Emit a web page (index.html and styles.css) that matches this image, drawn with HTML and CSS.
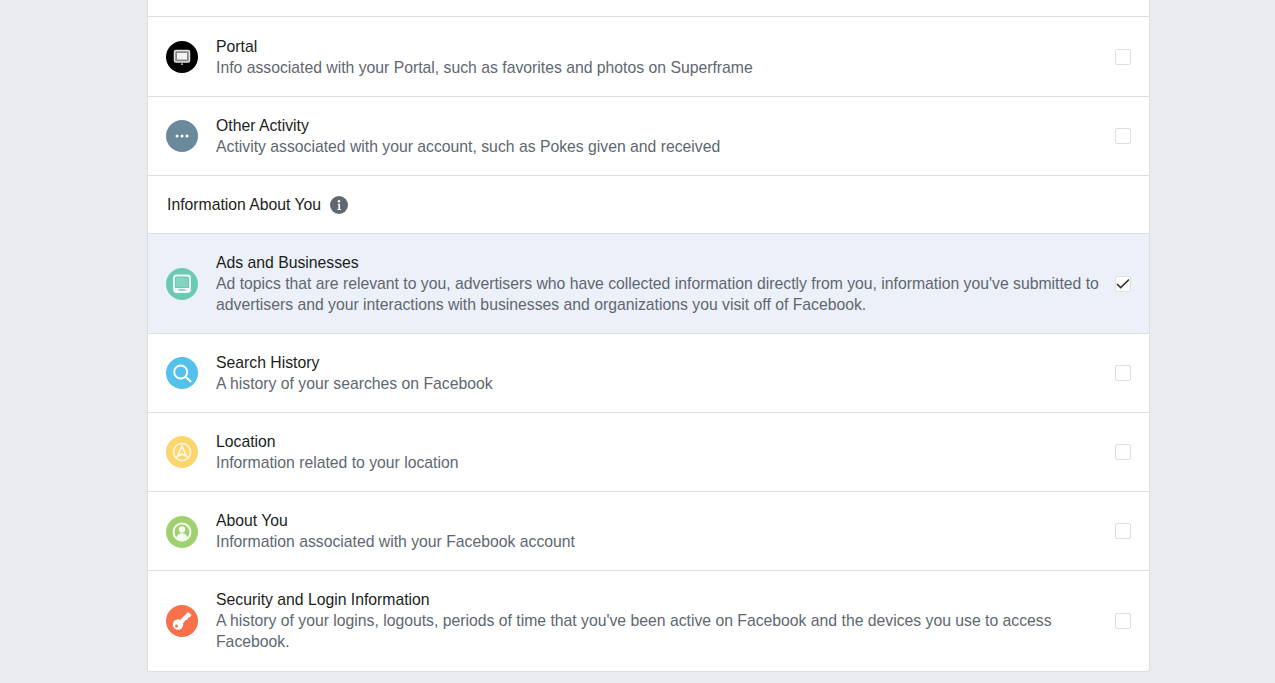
FILE: index.html
```html
<!DOCTYPE html>
<html lang="en">
<head>
<meta charset="utf-8">
<title>Your Facebook Information</title>
<link rel="stylesheet" href="styles.css">
</head>
<body>
<main class="card">
  <div class="stub"></div>
  <div class="row first">
    <span class="icon bg-portal"><svg viewBox="0 0 32 32"><rect x="8.500" y="9.500" width="15" height="11.500" rx="1.500" fill="#8a8a8a" stroke="#e4e4e4" stroke-width="1.500"/><rect x="11" y="12" width="10" height="6.500" fill="#f4f4f4"/><rect x="15" y="22.500" width="2" height="1.200" fill="#ddd"/></svg></span>
    <div class="text"><div class="title">Portal</div><div class="desc">Info associated with your Portal, such as favorites and photos on Superframe</div></div>
    <span class="check"></span>
  </div>
  <div class="row">
    <span class="icon bg-other"><svg viewBox="0 0 32 32"><circle cx="11" cy="16" r="1.500" fill="#fff"/><circle cx="16" cy="16" r="1.500" fill="#fff"/><circle cx="21" cy="16" r="1.500" fill="#fff"/></svg></span>
    <div class="text"><div class="title">Other Activity</div><div class="desc">Activity associated with your account, such as Pokes given and received</div></div>
    <span class="check"></span>
  </div>
  <div class="section">
    <span>Information About You</span>
    <span class="info"><svg viewBox="0 0 18 18"><circle cx="9" cy="9" r="9" fill="#606770"/><circle cx="9" cy="5.200" r="1.200" fill="#fff"/><path d="M7.800 7.800h2.200v5.200h1v1H7.400v-1h1V8.800h-.6z" fill="#fff"/></svg></span>
  </div>
  <div class="row selected">
    <span class="icon bg-ads"><svg viewBox="0 0 32 32"><rect x="8" y="7.500" width="16" height="16.500" rx="2.500" fill="none" stroke="#fff" stroke-width="1.800" opacity=".9"/><rect x="10" y="10" width="12" height="9" fill="#fff" opacity=".18"/><path d="M8 20v4h16v-4z" fill="#fff" opacity=".9"/><rect x="12.500" y="21.300" width="7" height="1.400" fill="#6bcab3"/></svg></span>
    <div class="text"><div class="title">Ads and Businesses</div><div class="desc">Ad topics that are relevant to you, advertisers who have collected information directly from you, information you've submitted to advertisers and your interactions with businesses and organizations you visit off of Facebook.</div></div>
    <span class="check checked"><svg viewBox="0 0 14 14"><path d="M1 7l3.700 3.500L13 2.500" fill="none" stroke="#333" stroke-width="1.700"/></svg></span>
  </div>
  <div class="row">
    <span class="icon bg-search"><svg viewBox="0 0 32 32"><circle cx="14.700" cy="15" r="6.500" fill="none" stroke="#fff" stroke-width="1.900"/><path d="M19.500 20l5.200 4.500" stroke="#fff" stroke-width="1.900" stroke-linecap="round"/></svg></span>
    <div class="text"><div class="title">Search History</div><div class="desc">A history of your searches on Facebook</div></div>
    <span class="check"></span>
  </div>
  <div class="row">
    <span class="icon bg-location"><svg viewBox="0 0 32 32"><circle cx="16" cy="16" r="8.500" fill="none" stroke="#fff" stroke-width="1.600" opacity=".8"/><path d="M16 10l4.500 10.500-4.500-2.500-4.500 2.500z" fill="none" stroke="#fff" stroke-width="1.600" opacity=".85"/></svg></span>
    <div class="text"><div class="title">Location</div><div class="desc">Information related to your location</div></div>
    <span class="check"></span>
  </div>
  <div class="row">
    <span class="icon bg-about"><svg viewBox="0 0 32 32"><circle cx="16" cy="16" r="8.500" fill="none" stroke="#fff" stroke-width="2" opacity=".9"/><circle cx="16" cy="13.500" r="3.200" fill="#fff" opacity=".9"/><path d="M10.500 21.500c1-3.400 3-4.300 5.500-4.300s4.500.9 5.500 4.300a8 8 0 0 1-11 0z" fill="#fff" opacity=".9"/></svg></span>
    <div class="text"><div class="title">About You</div><div class="desc">Information associated with your Facebook account</div></div>
    <span class="check"></span>
  </div>
  <div class="row last">
    <span class="icon bg-security"><svg viewBox="0 0 32 32"><path d="M14.500 14.500l7.500-7.500 3.500 2.800-1.500 2.500-2 .3-.3 2-2 .3-2.700 3.600z" fill="#fff"/><circle cx="12" cy="19.500" r="5.200" fill="#fff"/><circle cx="10.500" cy="21" r="1.500" fill="#f9704a"/></svg></span>
    <div class="text"><div class="title">Security and Login Information</div><div class="desc">A history of your logins, logouts, periods of time that you've been active on Facebook and the devices you use to access Facebook.</div></div>
    <span class="check"></span>
  </div>
</main>
</body>
</html>
```
FILE: styles.css
```css
html, body {
  margin: 0;
  padding: 0;
  background: #e9ebee;
  height: 683px;
  overflow: hidden;
}
body {
  font-family: "Liberation Sans", Arial, sans-serif;
  color: #1c1e21;
}
.card {
  box-sizing: border-box;
  width: 1003px;
  margin-left: 147px;
  background: #fff;
  border: 1px solid #dddfe2;
  border-top: 0;
  border-radius: 0 0 3px 3px;
}
.stub {
  height: 16px;
  border-bottom: 1px solid #dddfe2;
}
.row {
  display: flex;
  align-items: center;
  padding: 18px;
  border-bottom: 1px solid #dddfe2;
}
.first {
  padding-top: 19px;
}
.last {
  padding-bottom: 19px;
  border-bottom: 0;
}
.selected {
  background: #ecf0f9;
}
.icon {
  flex: none;
  width: 32px;
  height: 32px;
  border-radius: 50%;
  margin-right: 18px;
}
.icon svg {
  display: block;
  width: 32px;
  height: 32px;
}
.text {
  flex: 1;
  min-width: 0;
  font-size: 15.75px;
  line-height: 21px;
}
.desc {
  color: #606770;
}
.check {
  flex: none;
  box-sizing: border-box;
  width: 16px;
  height: 16px;
  margin-left: 15px;
  background: #fff;
  border: 1px solid #dddfe2;
  border-radius: 2px;
}
.check svg {
  display: block;
  width: 14px;
  height: 14px;
}
.section {
  display: flex;
  align-items: center;
  height: 57px;
  padding-left: 19px;
  font-size: 15.75px;
  border-bottom: 1px solid #dddfe2;
}
.info {
  width: 18px;
  height: 18px;
  margin-left: 9px;
}
.info svg {
  display: block;
  width: 18px;
  height: 18px;
}
.bg-portal { background: #000; }
.bg-other { background: #6a8a9b; }
.bg-ads { background: #6bcab3; }
.bg-search { background: #54c1ec; }
.bg-location { background: #fbd66f; }
.bg-about { background: #a1d06f; margin-top: 2px; }
.bg-security { background: #f9704a; }
```
